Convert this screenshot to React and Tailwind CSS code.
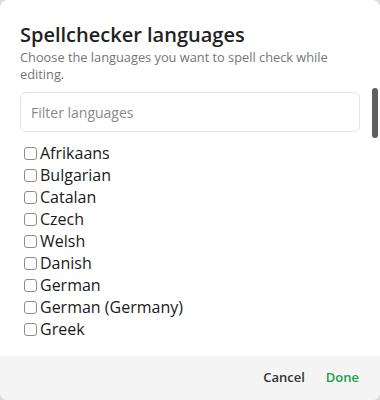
import { useState } from "react";

const LANGUAGES = [
  "Afrikaans",
  "Bulgarian",
  "Catalan",
  "Czech",
  "Welsh",
  "Danish",
  "German",
  "German (Germany)",
  "Greek",
];

export default function App() {
  const [filter, setFilter] = useState("");
  const [checked, setChecked] = useState({});

  const shown = LANGUAGES.filter((l) =>
    l.toLowerCase().includes(filter.toLowerCase())
  );

  return (
    <div className="h-[400px] w-[380px] bg-[#dcdcdc] font-['Open_Sans',sans-serif]">
      <div className="relative flex h-full flex-col overflow-hidden rounded-lg bg-white">
        {/* Header */}
        <div className="px-5 pt-[21px]">
          <h2 className="text-[20px] font-semibold leading-[28px] text-[#222]">
            Spellchecker languages
          </h2>
          <p className="text-[12.8px] leading-[17px] text-[#757575]">
            Choose the languages you want to spell check while editing.
          </p>
        </div>

        {/* List area */}
        <div className="mt-[9px] min-h-0 flex-1 overflow-hidden pl-5 pr-5">
          <input
            type="text"
            value={filter}
            onChange={(e) => setFilter(e.target.value)}
            placeholder="Filter languages"
            className="h-10 w-full rounded-md border border-[#e3e3e3] px-[10px] text-[14px] text-[#222] outline-none placeholder:text-[#8a8a8a]"
          />
          <div className="mt-[10px]">
            {shown.map((lang) => (
              <label
                key={lang}
                className="flex h-[22px] items-center text-[16px] leading-[22px] text-[#1a1a1a]"
              >
                <input
                  type="checkbox"
                  checked={!!checked[lang]}
                  onChange={() =>
                    setChecked((c) => ({ ...c, [lang]: !c[lang] }))
                  }
                  className="my-0 ml-1 mr-[3px] h-[13px] w-[13px] appearance-none rounded-[3px] border border-[#8d8d8d] bg-white checked:border-[#17a04a] checked:bg-[#17a04a]"
                />
                {lang}
              </label>
            ))}
          </div>
        </div>

        {/* scroll thumb */}
        <div className="absolute right-[2px] top-[88px] h-[50px] w-[6px] rounded-full bg-[#5f5f5f]" />

        {/* Footer */}
        <div className="flex h-11 shrink-0 items-center justify-end gap-[21px] bg-[#f4f4f4] pr-[21px]">
          <button className="text-[13px] font-semibold text-[#333]">Cancel</button>
          <button className="text-[13px] font-semibold text-[#17a04a]">Done</button>
        </div>
      </div>
    </div>
  );
}
